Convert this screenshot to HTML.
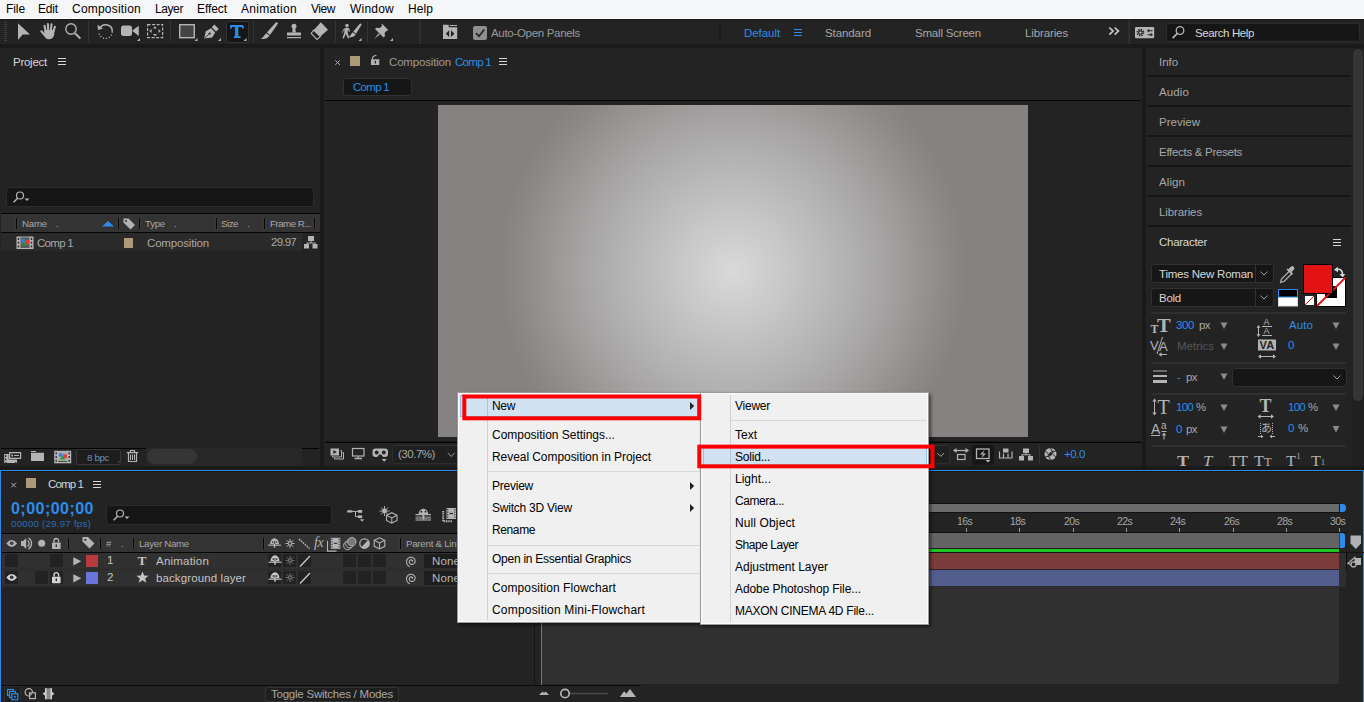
<!DOCTYPE html>
<html lang="en"><head><meta charset="utf-8"><title>Adobe After Effects</title>
<style>
html,body{margin:0;padding:0;background:#1a1a1a;overflow:hidden}
#app{position:relative;width:1364px;height:702px;overflow:hidden;background:#1a1a1a;font-family:"Liberation Sans",sans-serif;font-size:12px}
.r{position:absolute;box-sizing:border-box}
.t{position:absolute;white-space:nowrap;line-height:16px;height:16px}
svg.ic{position:absolute;left:0;top:0;pointer-events:none}

</style></head><body>
<div id="app">
<div class="r" style="left:0px;top:0px;width:1364px;height:19px;background:#f5f6f7;border-bottom:1px solid #fff"></div>
<div class="r" style="left:0px;top:19px;width:1364px;height:25px;background:#232323;"></div>
<div class="r" style="left:88px;top:21px;width:1px;height:21px;background:#343434;"></div>
<div class="r" style="left:170px;top:21px;width:1px;height:21px;background:#343434;"></div>
<div class="r" style="left:253px;top:21px;width:1px;height:21px;background:#343434;"></div>
<div class="r" style="left:335px;top:21px;width:1px;height:21px;background:#343434;"></div>
<div class="r" style="left:367px;top:21px;width:1px;height:21px;background:#343434;"></div>
<div class="r" style="left:0px;top:19px;width:1364px;height:1px;background:#171717;"></div>
<div class="r" style="left:419px;top:20px;width:2px;height:24px;background:#2f2f2f;"></div>
<div class="r" style="left:719px;top:20px;width:2px;height:24px;background:#1d1d1d;"></div>
<div class="r" style="left:1128px;top:20px;width:2px;height:24px;background:#2e2e2e;"></div>
<div class="r" style="left:225.5px;top:20.5px;width:23px;height:22px;background:#161616;border-radius:3px;border:1px solid #343434"></div>
<div class="r" style="left:0px;top:48px;width:320px;height:418px;background:#232323;"></div>
<div class="r" style="left:324px;top:48px;width:818px;height:418px;background:#232323;"></div>
<div class="r" style="left:1146px;top:48px;width:218px;height:418px;background:#232323;"></div>
<div class="r" style="left:0px;top:470px;width:1364px;height:233px;background:#232323;border:1px solid #2d8ceb;box-shadow:inset 1px 1px 0 #1a1614"></div>
<div class="r" style="left:1166px;top:23px;width:194px;height:19px;background:#161616;border:1px solid #2c2c2c;border-radius:3px"></div>
<div class="r" style="left:6px;top:187px;width:308px;height:20px;background:#161616;border:1px solid #2c2c2c;border-radius:3px"></div>
<div class="r" style="left:1px;top:213px;width:319px;height:1px;background:#050505;"></div>
<div class="r" style="left:1px;top:214px;width:319px;height:18px;background:#333333;"></div>
<div class="r" style="left:1px;top:232px;width:319px;height:1px;background:#050505;"></div>
<div class="r" style="left:15px;top:218px;width:3px;height:11px;background:#3a3a3a;"></div>
<div class="r" style="left:16px;top:218px;width:1px;height:11px;background:#060606;"></div>
<div class="r" style="left:117px;top:218px;width:3px;height:11px;background:#3a3a3a;"></div>
<div class="r" style="left:118px;top:218px;width:1px;height:11px;background:#060606;"></div>
<div class="r" style="left:138px;top:218px;width:3px;height:11px;background:#3a3a3a;"></div>
<div class="r" style="left:139px;top:218px;width:1px;height:11px;background:#060606;"></div>
<div class="r" style="left:215px;top:218px;width:3px;height:11px;background:#3a3a3a;"></div>
<div class="r" style="left:216px;top:218px;width:1px;height:11px;background:#060606;"></div>
<div class="r" style="left:263px;top:218px;width:3px;height:11px;background:#3a3a3a;"></div>
<div class="r" style="left:264px;top:218px;width:1px;height:11px;background:#060606;"></div>
<div class="r" style="left:313px;top:218px;width:3px;height:11px;background:#3a3a3a;"></div>
<div class="r" style="left:314px;top:218px;width:1px;height:11px;background:#060606;"></div>
<div class="r" style="left:1px;top:233px;width:301px;height:18px;background:#2a2a2a;"></div>
<div class="r" style="left:123.8px;top:238px;width:9.5px;height:9.7px;background:#ab9977;"></div>
<div class="r" style="left:1px;top:448px;width:145px;height:1px;background:#030303;"></div>
<div class="r" style="left:302px;top:448px;width:17px;height:1px;background:#030303;"></div>
<div class="r" style="left:146px;top:448px;width:156px;height:18px;background:#282828;"></div>
<div class="r" style="left:76px;top:449px;width:45px;height:16px;background:#1d1d1d;border:1px solid #383838;border-radius:3px"></div>
<div class="r" style="left:147px;top:449px;width:50px;height:15px;background:#353535;border-radius:8px"></div>
<div class="r" style="left:350px;top:56px;width:10px;height:10px;background:#ab9977;"></div>
<div class="r" style="left:343px;top:78px;width:69px;height:18px;background:#161616;border:1px solid #303030;border-radius:3px"></div>
<div class="r" style="left:325px;top:100px;width:816px;height:1px;background:#050505;"></div>
<div class="r" style="left:438px;top:105px;width:590px;height:332px;background:#868281;background:radial-gradient(circle 234px at 50% 50%, #d9d9d9 0, #c8c8c8 22%, #b4b3b3 48%, #9f9d9c 72%, #8d8a89 90%, #868281 100%)"></div>
<div class="r" style="left:325px;top:441px;width:816px;height:1px;background:#181818;"></div>
<div class="r" style="left:325px;top:442px;width:816px;height:1px;background:#020202;"></div>
<div class="r" style="left:391.5px;top:445px;width:70px;height:19px;background:#1f1f1f;border:1px solid #2e2e2e;border-radius:3px"></div>
<div class="r" style="left:920px;top:445px;width:30px;height:19px;background:#1f1f1f;border:1px solid #2e2e2e;border-radius:3px"></div>
<div class="r" style="left:972px;top:445px;width:22px;height:20px;background:#161616;border-radius:3px"></div>
<div class="r" style="left:1039px;top:446px;width:1px;height:18px;background:#343434;"></div>
<div class="r" style="left:1147px;top:75px;width:204px;height:2px;background:#161616;"></div>
<div class="r" style="left:1147px;top:105px;width:204px;height:2px;background:#161616;"></div>
<div class="r" style="left:1147px;top:135px;width:204px;height:2px;background:#161616;"></div>
<div class="r" style="left:1147px;top:165px;width:204px;height:2px;background:#161616;"></div>
<div class="r" style="left:1147px;top:195px;width:204px;height:2px;background:#161616;"></div>
<div class="r" style="left:1147px;top:225px;width:204px;height:2px;background:#161616;"></div>
<div class="r" style="left:1352px;top:48px;width:12px;height:418px;background:#202020;"></div>
<div class="r" style="left:1353px;top:49px;width:10px;height:352px;background:#353535;border-radius:5px"></div>
<div class="r" style="left:1151px;top:264px;width:123px;height:19px;background:#161616;border:1px solid #303030;border-radius:3px"></div>
<div class="r" style="left:1255px;top:265px;width:1px;height:17px;background:#303030;"></div>
<div class="r" style="left:1151px;top:288px;width:123px;height:19px;background:#161616;border:1px solid #303030;border-radius:3px"></div>
<div class="r" style="left:1255px;top:289px;width:1px;height:17px;background:#303030;"></div>
<div class="r" style="left:1151px;top:312px;width:195px;height:2px;background:#2f2f2f;"></div>
<div class="r" style="left:1151px;top:362px;width:195px;height:2px;background:#2f2f2f;"></div>
<div class="r" style="left:1151px;top:393px;width:195px;height:2px;background:#2f2f2f;"></div>
<div class="r" style="left:1151px;top:445px;width:195px;height:2px;background:#2f2f2f;"></div>
<div class="r" style="left:1232px;top:368px;width:115px;height:19px;background:#161616;border:1px solid #303030;border-radius:3px"></div>
<div class="r" style="left:1170px;top:451px;width:176px;height:15px;overflow:hidden;font-family:&quot;Liberation Serif&quot;,serif;color:#b4b4b4;font-size:15.5px;line-height:20px"><span style="position:absolute;left:7px;top:-.2px;transform-origin:0 50%;font-weight:700;transform:scaleX(1.16);">T</span><span style="position:absolute;left:33px;top:-.2px;transform-origin:0 50%;font-style:italic;transform:scaleX(1.08);">T</span><span style="position:absolute;left:59px;top:-.2px;transform-origin:0 50%;transform:scaleX(1.02);letter-spacing:-.3px;">TT</span><span style="position:absolute;left:84px;top:-.2px;transform-origin:0 50%;transform:scaleX(1.05);">T</span><span style="position:absolute;left:94px;top:-.2px;transform-origin:0 50%;font-size:12px;top:.950px;transform:scaleX(1.05);">T</span><span style="position:absolute;left:116px;top:-.2px;transform-origin:0 50%;transform:scaleX(1.05);">T</span><span style="position:absolute;left:126.5px;top:-.2px;transform-origin:0 50%;font-size:8px;top:-4.500px;">1</span><span style="position:absolute;left:141px;top:-.2px;transform-origin:0 50%;transform:scaleX(1.05);">T</span><span style="position:absolute;left:151px;top:-.2px;transform-origin:0 50%;font-size:8px;top:1.500px;">1</span></div>
<div class="r" style="left:26px;top:478px;width:10px;height:10px;background:#ab9977;"></div>
<div class="r" style="left:106px;top:505px;width:226px;height:20px;background:#161616;border:1px solid #2c2c2c;border-radius:3px"></div>
<div class="r" style="left:2px;top:533px;width:532px;height:1px;background:#050505;"></div>
<div class="r" style="left:2px;top:534px;width:532px;height:18px;background:#333333;"></div>
<div class="r" style="left:2px;top:552px;width:532px;height:1px;background:#050505;"></div>
<div class="r" style="left:67px;top:538px;width:3px;height:11px;background:#3a3a3a;"></div>
<div class="r" style="left:68px;top:538px;width:1px;height:11px;background:#060606;"></div>
<div class="r" style="left:99px;top:538px;width:3px;height:11px;background:#3a3a3a;"></div>
<div class="r" style="left:100px;top:538px;width:1px;height:11px;background:#060606;"></div>
<div class="r" style="left:132px;top:538px;width:3px;height:11px;background:#3a3a3a;"></div>
<div class="r" style="left:133px;top:538px;width:1px;height:11px;background:#060606;"></div>
<div class="r" style="left:262px;top:538px;width:3px;height:11px;background:#3a3a3a;"></div>
<div class="r" style="left:263px;top:538px;width:1px;height:11px;background:#060606;"></div>
<div class="r" style="left:399px;top:538px;width:3px;height:11px;background:#3a3a3a;"></div>
<div class="r" style="left:400px;top:538px;width:1px;height:11px;background:#060606;"></div>
<div class="r" style="left:2px;top:553px;width:532px;height:17px;background:#303030;"></div>
<div class="r" style="left:2px;top:569px;width:532px;height:1px;background:#2a2a2a;"></div>
<div class="r" style="left:268px;top:554px;width:13px;height:13px;background:#222222;"></div>
<div class="r" style="left:283px;top:554px;width:13px;height:13px;background:#222222;"></div>
<div class="r" style="left:298px;top:554px;width:13px;height:13px;background:#222222;"></div>
<div class="r" style="left:343px;top:554px;width:13px;height:13px;background:#222222;"></div>
<div class="r" style="left:358px;top:554px;width:13px;height:13px;background:#222222;"></div>
<div class="r" style="left:373px;top:554px;width:13px;height:13px;background:#222222;"></div>
<div class="r" style="left:424px;top:554px;width:101px;height:14px;background:#1e1e1e;"></div>
<div class="r" style="left:2px;top:570px;width:532px;height:17px;background:#303030;"></div>
<div class="r" style="left:2px;top:586px;width:532px;height:1px;background:#2a2a2a;"></div>
<div class="r" style="left:268px;top:571px;width:13px;height:13px;background:#222222;"></div>
<div class="r" style="left:283px;top:571px;width:13px;height:13px;background:#222222;"></div>
<div class="r" style="left:298px;top:571px;width:13px;height:13px;background:#222222;"></div>
<div class="r" style="left:343px;top:571px;width:13px;height:13px;background:#222222;"></div>
<div class="r" style="left:358px;top:571px;width:13px;height:13px;background:#222222;"></div>
<div class="r" style="left:373px;top:571px;width:13px;height:13px;background:#222222;"></div>
<div class="r" style="left:424px;top:571px;width:101px;height:14px;background:#1e1e1e;"></div>
<div class="r" style="left:5px;top:554px;width:13px;height:13px;background:#222222;"></div>
<div class="r" style="left:50px;top:554px;width:13px;height:13px;background:#222222;"></div>
<div class="r" style="left:86px;top:555px;width:12px;height:12px;background:#b73a3c;"></div>
<div class="r" style="left:5px;top:571px;width:13px;height:13px;background:#222222;"></div>
<div class="r" style="left:35px;top:571px;width:13px;height:13px;background:#222222;"></div>
<div class="r" style="left:50px;top:571px;width:13px;height:13px;background:#222222;"></div>
<div class="r" style="left:86px;top:572px;width:12px;height:12px;background:#6876dc;"></div>
<div class="r" style="left:1px;top:685px;width:640px;height:1px;background:#0c0c0c;"></div>
<div class="r" style="left:4px;top:686px;width:17px;height:16px;background:#1f1f1f;border:1px solid #2e2e2e;border-bottom:0"></div>
<div class="r" style="left:265px;top:687px;width:134px;height:15px;background:#1f1f1f;border:1px solid #333;border-radius:2px"></div>
<div class="r" style="left:534px;top:471px;width:1px;height:214px;background:#141414;"></div>
<div class="r" style="left:541px;top:552px;width:798px;height:132px;background:#303030;"></div>
<div class="r" style="left:1339px;top:552px;width:7px;height:35px;background:#2e2e2e;"></div>
<div class="r" style="left:541px;top:503px;width:799px;height:10px;background:#6b6b6b;border-top:1px solid #111;border-bottom:1px solid #111"></div>
<div class="r" style="left:1339px;top:504px;width:1px;height:8px;background:#1a1a1a;"></div>
<div class="r" style="left:541px;top:532px;width:806px;height:1px;background:#0e0e0e;"></div>
<div class="r" style="left:540px;top:528px;width:1px;height:4px;background:#9a9a9a;"></div>
<div class="r" style="left:593px;top:528px;width:1px;height:4px;background:#9a9a9a;"></div>
<div class="r" style="left:646px;top:528px;width:1px;height:4px;background:#9a9a9a;"></div>
<div class="r" style="left:700px;top:528px;width:1px;height:4px;background:#9a9a9a;"></div>
<div class="r" style="left:753px;top:528px;width:1px;height:4px;background:#9a9a9a;"></div>
<div class="r" style="left:806px;top:528px;width:1px;height:4px;background:#9a9a9a;"></div>
<div class="r" style="left:860px;top:528px;width:1px;height:4px;background:#9a9a9a;"></div>
<div class="r" style="left:913px;top:528px;width:1px;height:4px;background:#9a9a9a;"></div>
<div class="r" style="left:966px;top:528px;width:1px;height:4px;background:#9a9a9a;"></div>
<div class="r" style="left:1019px;top:528px;width:1px;height:4px;background:#9a9a9a;"></div>
<div class="r" style="left:1073px;top:528px;width:1px;height:4px;background:#9a9a9a;"></div>
<div class="r" style="left:1126px;top:528px;width:1px;height:4px;background:#9a9a9a;"></div>
<div class="r" style="left:1179px;top:528px;width:1px;height:4px;background:#9a9a9a;"></div>
<div class="r" style="left:1233px;top:528px;width:1px;height:4px;background:#9a9a9a;"></div>
<div class="r" style="left:1286px;top:528px;width:1px;height:4px;background:#9a9a9a;"></div>
<div class="r" style="left:1339px;top:528px;width:1px;height:4px;background:#9a9a9a;"></div>
<div class="r" style="left:541px;top:533px;width:799px;height:15px;background:#636363;"></div>
<div class="r" style="left:1339px;top:533px;width:1px;height:15px;background:#3a3a3a;"></div>
<div class="r" style="left:541px;top:548px;width:798px;height:1px;background:#1c1c1c;"></div>
<div class="r" style="left:541px;top:549px;width:798px;height:3px;background:#1fc626;"></div>
<div class="r" style="left:541px;top:552px;width:823px;height:1px;background:#151515;"></div>
<div class="r" style="left:541px;top:553px;width:798px;height:16px;background:#7b3b3a;"></div>
<div class="r" style="left:541px;top:569px;width:798px;height:1px;background:#262626;"></div>
<div class="r" style="left:541px;top:570px;width:798px;height:16px;background:#535d8d;"></div>
<div class="r" style="left:541px;top:586px;width:798px;height:1px;background:#2a2a2a;"></div>
<div class="r" style="left:1346px;top:534px;width:1px;height:18px;background:#1c1c1c;"></div>
<div class="r" style="left:1346px;top:552px;width:1px;height:18px;background:#0e0e0e;"></div>
<div class="r" style="left:541px;top:534px;width:1px;height:151px;background:#2d8ceb;"></div>
<svg class="ic" width="1364" height="702" viewBox="0 0 1364 702">
<path d="M4 22.5h3M4 24.5h3M4 26.5h3M4 28.5h3M4 30.5h3M4 32.5h3M4 34.5h3M4 36.5h3M4 38.5h3M4 40.5h3" stroke="#3c3c3c" stroke-width="1"/>
<path d="M18 23.3 L18 40 L22.6 34.6 L30 34.6 Z" fill="#b4b4b4"/>
<g stroke="#b4b4b4" stroke-width="2.100" stroke-linecap="round" fill="none"><path d="M45.600 31l-1.100-5.300M48.200 30.500l-.300-6.500M50.900 30.500l.600-6.100M53.400 31.500l1.500-4.700M45 35.500l-3.600-4.200"/></g><path d="M44.300 30h10.200l-.300 4.500c-.400 3.200-2.500 4.800-5.200 4.800-2.900 0-4.700-2-4.700-5z" fill="#b4b4b4"/>
<g fill="none" stroke="#b4b4b4"><circle cx="71" cy="29" r="5.2" stroke-width="1.4"/><path d="M75 33.2l5.400 5.400" stroke-width="2"/></g>
<g fill="none" stroke="#b4b4b4"><path d="M99.800 28.500A6.600 6.600 0 0 1 112.300 31.700" stroke-width="1.5"/><path d="M112.300 31.700A6.600 6.600 0 0 1 98.800 31.700" stroke-width="1.300" stroke-dasharray="1.100 1.900"/></g><path d="M97.500 24.800l.5 5.200 5-1.600z" fill="#b4b4b4"/>
<g fill="#b4b4b4"><rect x="121" y="25.500" width="11" height="10.500" rx="2.500"/><path d="M132 30.700l6.800-5v10.200z"/><path d="M140 38v3h-3z"/></g>
<g fill="none" stroke="#b4b4b4" stroke-width="1.200"><rect x="147.600" y="24.600" width="15" height="13" stroke-dasharray="3 1.500"/></g><g fill="#b4b4b4"><path d="M155 26.200l2 2.300h-4z"/><path d="M155 36.200l2-2.300h-4z"/><path d="M149.300 31l2.300-2v4z"/><path d="M160.800 31l-2.300-2v4z"/></g>
<rect x="179.700" y="24.700" width="14.600" height="13" fill="#444" stroke="#b4b4b4" stroke-width="1.400"/><path d="M197.500 38v3h-3z" fill="#b4b4b4"/>
<g fill="#b4b4b4"><path d="M204.200 38.600l1.600-7.400 5.200-3 4.200 4.200-3 5.200z"/><path d="M211.800 27.300l2.600-2.800 4.400 4.400-2.800 2.600z"/><path d="M221 38v3h-3z"/></g><circle cx="209.700" cy="33.600" r="1.100" fill="#232323"/><path d="M204.500 38.300l4.600-4.400" stroke="#232323" stroke-width=".8"/>
<path d="M246.500 38v3h-3z" fill="#b4b4b4"/>
<path d="M234 36.200h6.600v1.800h-6.600zM230 26.500h1.800v2h-1.800zM242 26.500h1.800v2h-1.800z" fill="#2d8ceb"/>
<g fill="#b4b4b4"><path d="M266.900 32.400l8.900-9.800c1-.900 2.600.300 1.900 1.500l-7.700 10.800z"/><path d="M266.200 33.200l3.200 2.400c-1.300 3-4.800 3.800-8.600 3.300 2.600-1.100 3.200-3.900 5.400-5.700z"/></g>
<g fill="#b4b4b4"><circle cx="294" cy="26.200" r="2.500"/><path d="M292.800 27.500h2.400l.6 5h-3.600z"/><path d="M287 32.500h14v3h-14z"/><path d="M287 37h14v1.200h-14z"/></g>
<g><path d="M320.800 22.300l7.200 7.500-7.700 6.800-6.700-6.400z" fill="#b4b4b4"/><path d="M313.600 30.200l6.700 6.400-3.400 2.800-5.700-5.900z" fill="none" stroke="#b4b4b4" stroke-width="1.100"/></g>
<g fill="#b4b4b4"><circle cx="347" cy="25.400" r="1.700"/><path d="M343.300 29.200l3-1.600 2.600.3 1.200 3.300-1 .5-1.200-2.200-.3 3.300 1.800 5.300-1.400.4-2.200-4.700-2 4.800-1.300-.500 1.800-5.400.2-3-1 .600-.6 2.400-1-.2z"/><path d="M353.300 31.500l6.500-7.700c.900-.800 2.200.200 1.600 1.300l-5.400 8.600z"/><path d="M352.700 32.200l3 2.300c-1.200 2.500-4.200 3-7.200 2.500 2.200-.9 2.500-3.300 4.200-4.800z"/><path d="M361.500 38v3h-3z"/></g>
<g fill="#b4b4b4"><path d="M381.500 23.300l7 7-1.800.4-2 2 .2 3.600-1.300 1.300-8.600-8.600 1.300-1.300 3.600.2 2-2z"/><path d="M378.600 33.200l1.200 1.200-5.600 4.600z"/><path d="M393 38v3h-3z"/></g>
<g><path d="M443 24.700h5.700v2.600h8.500v11.700h-14.200z" fill="#b4b4b4"/><path d="M449.700 25h7.500v1h-7.500z" fill="#b4b4b4"/><path d="M449.200 30.300v6.800l-3.400-3.400zM451 30.300v6.800l3.400-3.400z" fill="#232323"/></g>
<rect x="473" y="26" width="14" height="14" rx="2" fill="#8f8f8f"/><path d="M476 33.200l3 3.100 5.300-6.800" fill="none" stroke="#232323" stroke-width="1.700"/>
<path d="M794 29.500h8M794 32.500h8M794 35.500h8" stroke="#2d8ceb" stroke-width="1.200"/>
<path d="M1109.300 27.500l3.800 3.600-3.800 3.600M1114.600 27.500l3.800 3.600-3.800 3.600" fill="none" stroke="#c8c8c8" stroke-width="1.700"/>
<rect x="1135" y="27" width="19.200" height="11.200" rx="1.200" fill="#b4b4b4"/><circle cx="1140.400" cy="32.600" r="3" fill="none" stroke="#232323" stroke-width="1.700" stroke-dasharray="1.250 1.106"/><circle cx="1140.400" cy="32.600" r="2.300" fill="#232323"/><circle cx="1140.400" cy="32.600" r="1.150" fill="#cfcfcf"/><path d="M1148.500 30.700h4M1147.500 34.700h4" stroke="#232323" stroke-width="1.100"/><path d="M1146.800 30.700l2.400-1.900v3.800zM1153 34.700l-2.400-1.900v3.800z" fill="#232323"/>
<g fill="none" stroke="#b4b4b4"><circle cx="1180" cy="30.500" r="3.800" stroke-width="1.300"/><path d="M1177.300 33.400l-4.600 4.800" stroke-width="1.700"/></g>
<path d="M58 58.500h8M58 61.500h8M58 64.500h8" stroke="#d6d6d6" stroke-width="1.100"/>
<g fill="none" stroke="#b4b4b4"><circle cx="20" cy="195.500" r="3.500" stroke-width="1.200"/><path d="M17.600 198.200l-4 4" stroke-width="1.500"/></g><path d="M24.500 198.500h5l-2.500 2.600z" fill="#b4b4b4"/>
<path d="M102 226.500l6-5.500 6 5.500z" fill="#2d8ceb"/>
<path d="M123.500 218.500h5l6.500 6.500-4.500 4.500-7-7z" fill="#b4b4b4"/><circle cx="126" cy="221" r="1" fill="#333333"/>
<g><rect x="16.5" y="236.5" width="17" height="12.500" fill="#b6b6b6"/><rect x="17.8" y="238.0" width="1.400" height="2" fill="#2a2a2a"/><rect x="17.8" y="241.7" width="1.400" height="2" fill="#2a2a2a"/><rect x="17.8" y="245.4" width="1.400" height="2" fill="#2a2a2a"/><rect x="30.8" y="238.0" width="1.400" height="2" fill="#2a2a2a"/><rect x="30.8" y="241.7" width="1.400" height="2" fill="#2a2a2a"/><rect x="30.8" y="245.4" width="1.400" height="2" fill="#2a2a2a"/><rect x="20.5" y="237.3" width="9" height="9.700" fill="#606060"/><rect x="20.5" y="246.8" width="9" height=".900" fill="#3a3a3a"/><circle cx="23.0" cy="240.8" r="2" fill="#2f80e8"/><rect x="25.5" y="240.0" width="3.600" height="4" fill="#e83a3a"/><path d="M22.3 245.3l2.400-3.800 2.400 3.800z" fill="#18a030"/></g>
<g fill="#b4b4b4"><rect x="308" y="236" width="6" height="5"/><rect x="304" y="244" width="5" height="4.500"/><rect x="312.500" y="244" width="5" height="4.500"/><path d="M310.500 241h1v1.500h4v1.500h-1v-.5h-7v.5h-1v-1.500h4z"/></g>
<g><path d="M4.200 454h4.500v5.500h8.300v3.500h-12.800z" fill="#b4b4b4"/><rect x="5" y="455.200" width="1.300" height="1.800" fill="#232323"/><rect x="5" y="458.500" width="1.300" height="1.800" fill="#232323"/><rect x="5.500" y="462" width="1" height="1" fill="#232323"/><rect x="15.300" y="462" width="1" height="1" fill="#232323"/><rect x="9" y="452" width="12.200" height="7" fill="#b4b4b4"/><rect x="10.200" y="453.300" width="9.800" height="4.400" fill="#232323"/><rect x="11.300" y="454.600" width="1.700" height="1.800" fill="#b4b4b4"/><rect x="14" y="455" width="5" height="1" fill="#b4b4b4"/></g>
<path d="M31 451h5v1h-5zM31 452.800h13v8.200h-13z" fill="#b4b4b4"/>
<g><rect x="54.2" y="450.8" width="17" height="12.500" fill="#b6b6b6"/><rect x="55.5" y="452.3" width="1.400" height="2" fill="#2a2a2a"/><rect x="55.5" y="456.0" width="1.400" height="2" fill="#2a2a2a"/><rect x="55.5" y="459.7" width="1.400" height="2" fill="#2a2a2a"/><rect x="68.5" y="452.3" width="1.400" height="2" fill="#2a2a2a"/><rect x="68.5" y="456.0" width="1.400" height="2" fill="#2a2a2a"/><rect x="68.5" y="459.7" width="1.400" height="2" fill="#2a2a2a"/><rect x="58.2" y="451.6" width="9" height="9.700" fill="#a9a9a9"/><rect x="58.2" y="461.1" width="9" height=".900" fill="#3a3a3a"/><circle cx="60.7" cy="455.1" r="2" fill="#2f80e8"/><rect x="63.2" y="454.3" width="3.600" height="4" fill="#e83a3a"/><path d="M60.0 459.6l2.400-3.800 2.400 3.800z" fill="#18a030"/></g>
<g fill="none" stroke="#b4b4b4"><path d="M128.500 453v8.500h8v-8.500" stroke-width="1.200"/><path d="M130.500 454.500v5.500M132.500 454.500v5.500M134.500 454.500v5.500" stroke-width="1"/><path d="M126.800 452.600h11.400" stroke-width="1.300"/><path d="M130.500 452v-1.500h4v1.500" stroke-width="1.100"/></g>
<path d="M335.3 60.300000000000004l4.600 4.600M339.90000000000003 60.300000000000004l-4.600 4.600" stroke="#b0b0b0" stroke-width="1"/>
<g><rect x="371" y="59.200" width="8.300" height="5.800" rx=".500" fill="#b4b4b4"/><path d="M372.400 59.500v-1a3.600 3.300 0 0 1 4-3" fill="none" stroke="#b4b4b4" stroke-width="1.200"/><path d="M374.700 60.800h1.200v2.700h-1.200z" fill="#232323"/></g>
<path d="M499 58.500h8M499 61.500h8M499 64.500h8" stroke="#d6d6d6" stroke-width="1.100"/>
<g><rect x="330.500" y="448.500" width="8.500" height="7" fill="#b4b4b4"/><path d="M333.300 450v4l3.500-2z" fill="#232323"/><path d="M340.500 450.500h1v6.500h-9v-1" fill="none" stroke="#b4b4b4" stroke-width="1"/><path d="M342.500 452.500h1v6.500h-9v-1" fill="none" stroke="#b4b4b4" stroke-width="1"/></g>
<g><rect x="352.500" y="448.500" width="11.500" height="7.500" fill="none" stroke="#b4b4b4" stroke-width="1.200"/><path d="M358.200 456.500v1.500M354.500 458.500h7.500" stroke="#b4b4b4" stroke-width="1.300"/></g>
<g fill="#b4b4b4"><path d="M372.500 451.500a3 3 0 0 1 3-3h9.500a3 3 0 0 1 3 3v2.500a3 3 0 0 1-3 3h-1.800l-2-2.500h-2l-2 2.500h-1.700a3 3 0 0 1-3-3z"/><path d="M381.600 459h5.200l-2.600 2.800z"/></g><circle cx="376.700" cy="452.500" r="1.900" fill="#232323"/><circle cx="383.800" cy="452.500" r="1.900" fill="#232323"/>
<path d="M447.800 453l3.400 3.400 3.400-3.400" fill="none" stroke="#a4a4a4" stroke-width="1"/>
<path d="M937.300 453l3.400 3.400 3.400-3.400" fill="none" stroke="#a4a4a4" stroke-width="1"/>
<g fill="none" stroke="#b4b4b4" stroke-width="1.200"><rect x="957.500" y="454.500" width="7.500" height="5"/><path d="M955 450.500h12"/></g><path d="M953 450.500l3.500-2.500v5zM969 450.500l-3.500-2.500v5z" fill="#b4b4b4"/>
<g><rect x="976.500" y="449" width="12.500" height="9.500" fill="none" stroke="#b4b4b4" stroke-width="1.300"/><path d="M984.500 450l-4.500 4.500h3l-1.500 3.500 4.500-4.500h-3z" fill="#b4b4b4"/><path d="M985.500 460h5l-2.500 2.600z" fill="#b4b4b4"/></g>
<g fill="none" stroke="#b4b4b4" stroke-width="1.200"><path d="M999.500 451.500v6.500h12.500v-6.500"/><path d="M1003.500 453.500v4.500M1008 453.500v4.500"/></g><rect x="1003" y="448.500" width="5.500" height="4" fill="#b4b4b4"/>
<g fill="#b4b4b4"><rect x="1023" y="448.500" width="6" height="4.500"/><rect x="1019" y="456" width="5" height="4.500"/><rect x="1028" y="456" width="5" height="4.500"/><path d="M1025.500 453h1v1.200h4v1.800h-1v-.8h-7v.8h-1v-1.800h4z"/></g>
<g><circle cx="1050.500" cy="454" r="6" fill="#b4b4b4"/><g stroke="#232323" stroke-width="1" fill="none"><path d="M1050.500 448l2.500 5M1055.700 451l-5.500 1.500M1055.700 457l-4-4M1050.500 460l-2.500-5M1045.300 457l5.500-1.500M1045.300 451l4 4"/></g><circle cx="1050.500" cy="454" r="1.600" fill="#232323"/></g>
<path d="M1333 239.500h8M1333 242.500h8M1333 245.500h8" stroke="#d6d6d6" stroke-width="1.100"/>
<path d="M1260.5 271.5l3.500 3.500 3.500-3.500" fill="none" stroke="#a4a4a4" stroke-width="1"/>
<path d="M1260.5 295.5l3.500 3.500 3.500-3.500" fill="none" stroke="#a4a4a4" stroke-width="1"/>
<g><path d="M1280.500 282.500l1-3.500 8-8 2.500 2.500-8 8z" fill="none" stroke="#b4b4b4" stroke-width="1.200"/><path d="M1288 269.500l2.800-2.800a2 2 0 0 1 2.800 0l.2.200a2 2 0 0 1 0 2.800l-2.800 2.800z" fill="#b4b4b4"/><path d="M1287 269l5.500 5.500" stroke="#b4b4b4" stroke-width="1.600"/></g>
<g><rect x="1316.500" y="277.500" width="29" height="29" fill="#fff" stroke="#000" stroke-width="1"/><rect x="1325" y="286" width="12" height="12" fill="#000"/><path d="M1317 306l28.500-28.500" stroke="#e31313" stroke-width="1.800"/></g>
<rect x="1303.500" y="264.500" width="29" height="29" fill="#e31313" stroke="#000" stroke-width="1"/>
<g fill="none" stroke="#d6d6d6" stroke-width="1.600"><path d="M1336.500 269.500c4-1 6.500 1.500 6 5.500"/></g><path d="M1334 269.800l4-3v5.500z" fill="#d6d6d6"/><path d="M1342.700 277.500l-3.200-3.500h5.800z" fill="#d6d6d6"/>
<rect x="1278.500" y="289.500" width="19" height="16.500" fill="#fff" stroke="#ddd" stroke-width="1"/><rect x="1278.500" y="289.500" width="19" height="7.500" fill="#000" stroke="#2d8ceb" stroke-width="1"/>
<rect x="1304.500" y="295.500" width="10" height="10" fill="#fff" stroke="#222" stroke-width="1"/><path d="M1305 305l9-9" stroke="#e31313" stroke-width="1"/>
<path d="M1220.5 322.5h7l-3.500 6.500z" fill="#8a8a8a"/>
<g stroke="#b4b4b4" fill="none" stroke-width="1"><path d="M1258.500 327v8"/><path d="M1262 326.500h10M1262 335.500h10"/></g><path d="M1258.500 325l2 2.800h-4zM1258.500 337l2-2.800h-4z" fill="#b4b4b4"/>
<path d="M1332.5 322.5h7l-3.500 6.500z" fill="#8a8a8a"/>
<path d="M1157 354l5.500-17" stroke="#b4b4b4" stroke-width="1"/><path d="M1160 354.500h7" stroke="#b4b4b4" stroke-width="1"/><path d="M1158.500 354.500l3-2.200v4.400z" fill="#b4b4b4"/>
<path d="M1220.5 343.5h7l-3.500 6.500z" fill="#8a8a8a"/>
<rect x="1258" y="339.500" width="18" height="11" fill="#b4b4b4"/><path d="M1259.500 356.500h15" stroke="#b4b4b4" stroke-width="1"/><path d="M1258 356.500l3-2.200v4.400zM1276 356.500l-3-2.200v4.400z" fill="#b4b4b4"/>
<path d="M1332.5 343.5h7l-3.500 6.500z" fill="#8a8a8a"/>
<path d="M1153 371h14" stroke="#b4b4b4" stroke-width="1"/><path d="M1153 376h14" stroke="#b4b4b4" stroke-width="2"/><path d="M1153 381.500h14" stroke="#b4b4b4" stroke-width="3"/>
<path d="M1220.5 373.5h7l-3.500 6.500z" fill="#8a8a8a"/>
<path d="M1333.5 375.5l3.500 3.500 3.500-3.500" fill="none" stroke="#a4a4a4" stroke-width="1"/>
<path d="M1154.500 400.500v13" stroke="#b4b4b4" stroke-width="1"/><path d="M1154.500 398.500l2.200 3h-4.400zM1154.500 415.500l2.200-3h-4.400z" fill="#b4b4b4"/>
<path d="M1220.5 404.5h7l-3.500 6.500z" fill="#8a8a8a"/>
<path d="M1259 416.500h13" stroke="#b4b4b4" stroke-width="1"/><path d="M1257.500 416.500l3-2.200v4.400zM1274 416.500l-3-2.200v4.400z" fill="#b4b4b4"/>
<path d="M1332.5 404.5h7l-3.500 6.500z" fill="#8a8a8a"/>
<path d="M1151 435.500h9M1161.500 431.500h5" stroke="#b4b4b4" stroke-width="1"/><path d="M1164 434.500v5" stroke="#b4b4b4" stroke-width="1"/><path d="M1164 432.500l2.200 3h-4.400z" fill="#b4b4b4"/>
<path d="M1220.5 426.5h7l-3.500 6.500z" fill="#8a8a8a"/>
<path d="M1260.500 423v11M1272.500 423v11" stroke="#b4b4b4" stroke-width="1" stroke-dasharray="1 1"/><path d="M1258 436.500h4M1275 436.500h-4" stroke="#b4b4b4" stroke-width="1"/><path d="M1263.500 436.500l-2.500-1.800v3.600zM1269.500 436.500l2.500-1.800v3.600z" fill="#b4b4b4"/>
<path d="M1332.5 426h7l-3.500 6.500z" fill="#8a8a8a"/>
<path d="M11.3 482.8l4.600 4.600M15.899999999999999 482.8l-4.600 4.600" stroke="#b0b0b0" stroke-width="1"/>
<path d="M93 481.500h8M93 484.500h8M93 487.500h8" stroke="#d6d6d6" stroke-width="1.100"/>
<g fill="none" stroke="#b4b4b4"><circle cx="120" cy="513.500" r="3.500" stroke-width="1.200"/><path d="M117.600 516.200l-4 4" stroke-width="1.500"/></g><path d="M124.500 516.500h5l-2.500 2.600z" fill="#b4b4b4"/>
<g fill="#b4b4b4"><rect x="347" y="510.200" width="5.500" height="2.400" rx="1.200"/><rect x="358" y="510" width="4.200" height="2.800"/><rect x="358" y="515.300" width="4.200" height="2.800"/><path d="M360 519.300h4.200l-2.100 2.500z"/></g><path d="M352 511.400h6M355.500 511.400v5.300h2.500" fill="none" stroke="#b4b4b4" stroke-width="1"/>
<g stroke="#b4b4b4" fill="none" stroke-width="1.100"><path d="M386.500 515.300l5.300-2.600 5.200 2.600v5.200l-5.200 2.700-5.300-2.700z"/><path d="M386.500 515.300l5.300 2.600 5.200-2.600M391.800 517.900v5.300"/><path d="M379.500 511h10M384.500 506v10M381 507.500l7 7M388 507.500l-7 7" stroke-width=".9"/></g><circle cx="384.500" cy="511" r="2.400" fill="#b4b4b4"/>
<g><path d="M418.500 514.500a4.900 5.800 0 0 1 9.800 0z" fill="#b4b4b4"/><path d="M415.500 514.600h15.500" stroke="#b4b4b4" stroke-width="1.200"/><rect x="415.500" y="516.300" width="15.500" height="4.700" fill="#707070"/><rect x="422.500" y="512.500" width="1.800" height="7" fill="#b4b4b4"/><circle cx="421.300" cy="511.700" r=".900" fill="#232323"/><circle cx="425.500" cy="511.700" r=".900" fill="#232323"/></g>
<g><rect x="446.5" y="508" width="9.500" height="11" fill="#b4b4b4"/><path d="M447.7 509v9M454.8 509v9" stroke="#232323" stroke-width="1.100" stroke-dasharray="1.300 1.200"/><path d="M449.5 513.5h3.500" stroke="#232323" stroke-width="1.200"/><path d="M443.2 511v10.300h9" fill="none" stroke="#b4b4b4" stroke-width="2" stroke-dasharray="1.400 .8"/></g>
<g><path d="M6.299999999999999 543.5q5.400-6.800 10.800 0q-5.400 6.800-10.800 0z" fill="#b4b4b4"/><circle cx="11.7" cy="543.3" r="1.800" fill="#333333"/><circle cx="11.7" cy="543.3" r=".700" fill="#6a6a6a"/></g>
<path d="M21 541h2.200l3-3v11l-3-3h-2.200z" fill="#b4b4b4"/><g fill="none" stroke="#b4b4b4" stroke-width="1.300"><path d="M27.500 540.500a3.500 3.500 0 0 1 0 6"/><path d="M28.500 538a6.500 6.500 0 0 1 0 11"/></g>
<circle cx="41.700" cy="543.200" r="3.500" fill="#b4b4b4"/>
<g><rect x="52.0" y="542.6" width="8.600" height="6.500" rx=".700" fill="#b4b4b4"/><path d="M54.0 542.6v-1.800a2.300 2.300 0 0 1 4.600 0v1.800" fill="none" stroke="#b4b4b4" stroke-width="1.400"/><rect x="55.599999999999994" y="544.4" width="1.400" height="2.600" fill="#333333"/></g>
<path d="M82.500 537h5.500l6.500 6.500-5 5-7-7z" fill="#b4b4b4"/><circle cx="85.300" cy="539.800" r="1.100" fill="#333333"/>
<g><path d="M270 544.3a4.500 6 0 0 1 9 0z" fill="#b4b4b4"/><path d="M268 545.2h13" stroke="#b4b4b4" stroke-width="1.100"/><rect x="273.8" y="543.5" width="1.400" height="4.300" fill="#b4b4b4"/><circle cx="272.7" cy="542.1" r=".800" fill="#333333"/><circle cx="276.3" cy="542.1" r=".800" fill="#333333"/><rect x="274.1" y="541.0" width=".800" height="3" fill="#333333"/></g>
<g stroke="#b4b4b4" stroke-width="1"><path d="M285.5 543.5h9M290 539.0v9M286.8 540.3l6.400 6.400M293.2 540.3l-6.400 6.400"/></g><circle cx="290" cy="543.5" r="2.3" fill="#b4b4b4"/><circle cx="290" cy="543.5" r="1.1999999999999997" fill="#333333"/>
<path d="M299 539l10.500 9.500" stroke="#b4b4b4" stroke-width="1.600" stroke-dasharray="1.600 1"/>
<g><rect x="330.8" y="537.8" width="9.500" height="11" fill="#b4b4b4"/><path d="M332.0 538.8v9M339.1 538.8v9" stroke="#333333" stroke-width="1.100" stroke-dasharray="1.300 1.200"/><path d="M333.8 543.3h3.500" stroke="#333333" stroke-width="1.200"/><path d="M327.5 540.8v10.300h9" fill="none" stroke="#b4b4b4" stroke-width="1.1" stroke-dasharray="none"/></g>
<g fill="#333333" stroke="#b4b4b4" stroke-width="1"><circle cx="347.800" cy="545.500" r="4.200"/><circle cx="349.800" cy="543.600" r="4.200"/><circle cx="351.800" cy="541.700" r="4.200" fill="#787878"/></g>
<circle cx="364.500" cy="543.500" r="4.700" fill="none" stroke="#b4b4b4" stroke-width="1.200"/><path d="M368.200 540a5.200 5.200 0 0 1-7.200 7.400z" fill="#b4b4b4"/>
<g stroke="#b4b4b4" fill="none" stroke-width="1.100"><path d="M374.200 540.300l5.300-2.500 5.300 2.500v6l-5.300 2.700-5.300-2.700z"/><path d="M374.200 540.300l5.300 2.600 5.300-2.600M379.500 542.900v6"/></g>
<path d="M73.300 557.2l8 4.100-8 4.100z" fill="#b4b4b4"/>
<g><path d="M270.5 561.3a4.500 6 0 0 1 9 0z" fill="#c8c8c8"/><path d="M268.5 562.2h13" stroke="#c8c8c8" stroke-width="1.100"/><rect x="274.3" y="560.5" width="1.400" height="4.300" fill="#c8c8c8"/><circle cx="273.2" cy="559.1" r=".800" fill="#222222"/><circle cx="276.8" cy="559.1" r=".800" fill="#222222"/><rect x="274.6" y="558.0" width=".800" height="3" fill="#222222"/></g>
<g stroke="#6e6e6e" stroke-width="1"><path d="M285.5 560.5h9M290 556.0v9M286.8 557.3l6.400 6.400M293.2 557.3l-6.400 6.400"/></g><circle cx="290" cy="560.5" r="2" fill="#6e6e6e"/><circle cx="290" cy="560.5" r="0.8999999999999999" fill="#222222"/>
<path d="M300 566.5l10-10.500" stroke="#c8c8c8" stroke-width="1.400"/>
<path d="M412.0 561.9L412.1 561.8L412.2 561.7L412.3 561.6L412.4 561.4L412.5 561.2L412.5 561.0L412.4 560.8L412.3 560.5L412.1 560.3L411.9 560.2L411.7 560.0L411.4 559.9L411.1 559.9L410.8 559.9L410.4 560.0L410.1 560.2L409.8 560.4L409.6 560.7L409.4 561.1L409.3 561.5L409.2 561.9L409.3 562.4L409.4 562.8L409.6 563.3L409.9 563.6L410.3 564.0L410.8 564.2L411.3 564.4L411.9 564.4L412.4 564.4L413.0 564.2L413.5 564.0L414.0 563.6L414.5 563.1L414.8 562.6L415.0 561.9L415.1 561.3L415.1 560.6L414.9 559.9L414.6 559.2L414.2 558.6L413.7 558.1L413.0 557.7L412.3 557.4L411.5 557.2L410.7 557.2L409.9 557.4L409.1 557.7L408.3 558.1L407.7 558.7L407.2 559.5L406.8 560.3L406.6 561.2L406.5 562.1L406.7 563.1L407.0 564.0L407.5 564.8L408.1 565.6L408.9 566.2L409.8 566.7" fill="none" stroke="#b4b4b4" stroke-width="1.100"/>
<path d="M73.300 574.2l8 4.100-8 4.100z" fill="#b4b4b4"/>
<g><path d="M270.5 578.3a4.500 6 0 0 1 9 0z" fill="#c8c8c8"/><path d="M268.5 579.2h13" stroke="#c8c8c8" stroke-width="1.100"/><rect x="274.3" y="577.5" width="1.400" height="4.300" fill="#c8c8c8"/><circle cx="273.2" cy="576.1" r=".800" fill="#222222"/><circle cx="276.8" cy="576.1" r=".800" fill="#222222"/><rect x="274.6" y="575.0" width=".800" height="3" fill="#222222"/></g>
<g stroke="#6e6e6e" stroke-width="1"><path d="M285.5 577.5h9M290 573.0v9M286.8 574.3l6.400 6.400M293.2 574.3l-6.400 6.400"/></g><circle cx="290" cy="577.5" r="2" fill="#6e6e6e"/><circle cx="290" cy="577.5" r="0.8999999999999999" fill="#222222"/>
<path d="M300 583.5l10-10.500" stroke="#c8c8c8" stroke-width="1.400"/>
<path d="M412.0 578.9L412.1 578.8L412.2 578.7L412.3 578.6L412.4 578.4L412.5 578.2L412.5 578.0L412.4 577.8L412.3 577.5L412.1 577.3L411.9 577.2L411.7 577.0L411.4 576.9L411.1 576.9L410.8 576.9L410.4 577.0L410.1 577.2L409.8 577.4L409.6 577.7L409.4 578.1L409.3 578.5L409.2 578.9L409.3 579.4L409.4 579.8L409.6 580.3L409.9 580.6L410.3 581.0L410.8 581.2L411.3 581.4L411.9 581.4L412.4 581.4L413.0 581.2L413.5 581.0L414.0 580.6L414.5 580.1L414.8 579.6L415.0 578.9L415.1 578.3L415.1 577.6L414.9 576.9L414.6 576.2L414.2 575.6L413.7 575.1L413.0 574.7L412.3 574.4L411.5 574.2L410.7 574.2L409.9 574.4L409.1 574.7L408.3 575.1L407.7 575.7L407.2 576.5L406.8 577.3L406.6 578.2L406.5 579.1L406.7 580.1L407.0 581.0L407.5 581.8L408.1 582.6L408.9 583.2L409.8 583.7" fill="none" stroke="#b4b4b4" stroke-width="1.100"/>
<g><path d="M6.299999999999999 577.5q5.400-6.800 10.800 0q-5.400 6.800-10.800 0z" fill="#d4d4d4"/><circle cx="11.7" cy="577.3" r="1.800" fill="#222"/><circle cx="11.7" cy="577.3" r=".700" fill="#6a6a6a"/></g>
<g><rect x="52.0" y="576.7" width="8.600" height="6.500" rx=".700" fill="#d4d4d4"/><path d="M54.0 576.7v-1.800a2.300 2.300 0 0 1 4.600 0v1.800" fill="none" stroke="#d4d4d4" stroke-width="1.400"/><rect x="55.599999999999994" y="578.5" width="1.400" height="2.600" fill="#222222"/></g>
<path d="M142.500 571.500l1.700 4 4.300.300-3.300 2.700 1.100 4.200-3.800-2.400-3.800 2.400 1.100-4.200-3.300-2.700 4.300-.300z" fill="#c4c4c4"/>
<g fill="#1f1f1f" stroke="#2d8ceb" stroke-width="1.200"><rect x="7.500" y="689.500" width="6" height="6"/><rect x="9.500" y="691.500" width="6" height="6"/><rect x="11.800" y="693.800" width="6" height="6"/></g><circle cx="14.800" cy="696.800" r="1.100" fill="#2d8ceb"/>
<g fill="none" stroke="#b4b4b4" stroke-width="1.200"><circle cx="28.800" cy="692.300" r="3.700"/><rect x="29.600" y="692.800" width="5.800" height="5.800" fill="#232323"/></g><path d="M30.200 693.400h2.500l-2.500 2.500z" fill="#b4b4b4"/>
<path d="M45 688.200h7v3.800l2.300 1.700-2.300 1.700v3.800h-7v-3.800l-2.300-1.700 2.300-1.700z" fill="#8a8a8a"/><path d="M45 688.200h1.500v11h-1.500v-3.800l-2.300-1.700 2.300-1.700zM52 688.200h-1.500v11h1.500v-3.800l2.300-1.700-2.300-1.700z" fill="#cfcfcf"/>
<path d="M1340 504h2.500a3.500 4 0 0 1 0 8h-2.500z" fill="#2d8ceb"/>
<path d="M1340 533h2.500a2.500 3 0 0 1 2.500 3v9.500a2.500 2.500 0 0 1-2.500 2.500h-2.500z" fill="#2d8ceb"/>
<path d="M1350.500 535.500h10.500v8l-5.200 5.500-5.300-5.500z" fill="#b0b0b0"/>
<g><rect x="1354.500" y="558" width="6.500" height="7" fill="#b4b4b4"/><path d="M1355.500 556.800l-7.500 6.500 4 1.800" fill="none" stroke="#b4b4b4" stroke-width="1.200"/><circle cx="1353.500" cy="564.400" r="2.500" fill="#232323" stroke="#b4b4b4" stroke-width="1.200"/></g>
<path d="M539 695h10l-3.300-3.500-1.700 1.500-1.500-1.500z" fill="#b4b4b4"/>
<path d="M570 693.500h38" stroke="#4a4a4a" stroke-width="1.500"/><circle cx="565" cy="693.500" r="4.200" fill="#232323" stroke="#b4b4b4" stroke-width="1.700"/>
<path d="M620 697h16l-6-8-4 5-2-2.500z" fill="#b4b4b4"/><path d="M620 697l4.500-5.500 2 2.500" fill="#b4b4b4"/>
</svg>
<div class="t" style="left:6px;top:1.0px;font-size:12px;color:#000;letter-spacing:-0.09px;">File</div>
<div class="t" style="left:38px;top:1.0px;font-size:12px;color:#000;letter-spacing:-0.17px;">Edit</div>
<div class="t" style="left:72px;top:1.0px;font-size:12px;color:#000;letter-spacing:0.21px;">Composition</div>
<div class="t" style="left:155px;top:1.0px;font-size:12px;color:#000;letter-spacing:-0.41px;">Layer</div>
<div class="t" style="left:197px;top:1.0px;font-size:12px;color:#000;letter-spacing:-0.08px;">Effect</div>
<div class="t" style="left:241px;top:1.0px;font-size:12px;color:#000;letter-spacing:0.29px;">Animation</div>
<div class="t" style="left:311px;top:1.0px;font-size:12px;color:#000;letter-spacing:-0.45px;">View</div>
<div class="t" style="left:350px;top:1.0px;font-size:12px;color:#000;letter-spacing:0.22px;">Window</div>
<div class="t" style="left:408px;top:1.0px;font-size:12px;color:#000;letter-spacing:0.08px;">Help</div>
<div class="t" style="left:230.2px;top:23.5px;font-size:19px;color:#2d8ceb;font-weight:700;font-family:'Liberation Sans', sans-serif;transform:scaleX(1.16);transform-origin:0 50%;">T</div>
<div class="t" style="left:491px;top:24.5px;font-size:11.5px;color:#9a9a9a;letter-spacing:-0.31px;">Auto-Open Panels</div>
<div class="t" style="left:744px;top:24.5px;font-size:11.5px;color:#2d8ceb;letter-spacing:-0.06px;">Default</div>
<div class="t" style="left:825px;top:24.5px;font-size:11.5px;color:#a7a7a7;letter-spacing:-0.09px;">Standard</div>
<div class="t" style="left:915px;top:24.5px;font-size:11.5px;color:#a7a7a7;letter-spacing:-0.20px;">Small Screen</div>
<div class="t" style="left:1025px;top:24.5px;font-size:11.5px;color:#a7a7a7;letter-spacing:-0.12px;">Libraries</div>
<div class="t" style="left:1195px;top:24.5px;font-size:11.5px;color:#d8d8d8;letter-spacing:-0.39px;">Search Help</div>
<div class="t" style="left:13px;top:54.0px;font-size:11.5px;color:#d6d6d6;letter-spacing:-0.26px;">Project</div>
<div class="t" style="left:22px;top:215.5px;font-size:9.7px;color:#a7a7a7;letter-spacing:-0.21px;">Name</div>
<div class="t" style="left:56px;top:215.5px;font-size:9.7px;color:#a7a7a7;">.</div>
<div class="t" style="left:145px;top:215.5px;font-size:9.7px;color:#a7a7a7;letter-spacing:-0.25px;">Type</div>
<div class="t" style="left:174px;top:215.5px;font-size:9.7px;color:#a7a7a7;">.</div>
<div class="t" style="left:221px;top:215.5px;font-size:9.7px;color:#a7a7a7;letter-spacing:-0.46px;">Size</div>
<div class="t" style="left:247px;top:215.5px;font-size:9.7px;color:#a7a7a7;">.</div>
<div class="t" style="left:270px;top:215.5px;font-size:9.7px;color:#a7a7a7;letter-spacing:-0.48px;">Frame R...</div>
<div class="t" style="left:37px;top:234.5px;font-size:11.5px;color:#a7a7a7;letter-spacing:-0.71px;">Comp 1</div>
<div class="t" style="left:147px;top:234.5px;font-size:11.5px;color:#a7a7a7;letter-spacing:-0.17px;">Composition</div>
<div class="t" style="left:271px;top:233.5px;font-size:11.5px;color:#a7a7a7;letter-spacing:-0.76px;">29.97</div>
<div class="t" style="left:87px;top:449.5px;font-size:9.7px;color:#6f8fb3;letter-spacing:-0.34px;">8 bpc</div>
<div class="t" style="left:117.5px;top:450.5px;font-size:9px;color:#6f8fb3;">.</div>
<div class="t" style="left:389px;top:54.0px;font-size:11.5px;color:#9a9a9a;letter-spacing:-0.17px;">Composition</div>
<div class="t" style="left:455px;top:54.0px;font-size:11.5px;color:#2d8ceb;letter-spacing:-0.71px;">Comp 1</div>
<div class="t" style="left:353px;top:79.0px;font-size:11.5px;color:#2d8ceb;letter-spacing:-0.71px;">Comp 1</div>
<div class="t" style="left:398px;top:446.0px;font-size:11.5px;color:#a7a7a7;letter-spacing:-0.47px;">(30.7%)</div>
<div class="t" style="left:1064px;top:446.0px;font-size:11.5px;color:#2d8ceb;letter-spacing:-0.43px;">+0.0</div>
<div class="t" style="left:1159px;top:54.0px;font-size:11.5px;color:#a7a7a7;letter-spacing:-0.05px;">Info</div>
<div class="t" style="left:1159px;top:84.0px;font-size:11.5px;color:#a7a7a7;letter-spacing:0.12px;">Audio</div>
<div class="t" style="left:1159px;top:114.0px;font-size:11.5px;color:#a7a7a7;letter-spacing:0.01px;">Preview</div>
<div class="t" style="left:1159px;top:144.0px;font-size:11.5px;color:#a7a7a7;letter-spacing:-0.29px;">Effects &amp; Presets</div>
<div class="t" style="left:1159px;top:174.0px;font-size:11.5px;color:#a7a7a7;letter-spacing:0.08px;">Align</div>
<div class="t" style="left:1159px;top:204.0px;font-size:11.5px;color:#a7a7a7;letter-spacing:-0.12px;">Libraries</div>
<div class="t" style="left:1159px;top:234.0px;font-size:11.5px;color:#d6d6d6;letter-spacing:-0.28px;">Character</div>
<div class="t" style="left:1159px;top:266.0px;font-size:11.5px;color:#d6d6d6;letter-spacing:-0.22px;">Times New Roman</div>
<div class="t" style="left:1159px;top:289.5px;font-size:11.5px;color:#d6d6d6;letter-spacing:-0.26px;">Bold</div>
<div class="t" style="left:1150.5px;top:320.5px;font-size:12px;color:#b4b4b4;font-weight:700;font-family:'Liberation Serif', serif;">T</div>
<div class="t" style="left:1156.5px;top:317.5px;font-size:19px;color:#b4b4b4;font-weight:700;font-family:'Liberation Serif', serif;transform:scaleX(1.08);transform-origin:0 50%;">T</div>
<div class="t" style="left:1176px;top:317.0px;font-size:11.5px;color:#2d8ceb;letter-spacing:-0.40px;">300</div>
<div class="t" style="left:1199px;top:317.0px;font-size:11.5px;color:#a7a7a7;letter-spacing:-0.58px;">px</div>
<div class="t" style="left:1263.5px;top:313.5px;font-size:9px;color:#b4b4b4;">A</div>
<div class="t" style="left:1263.5px;top:323.0px;font-size:9px;color:#b4b4b4;">A</div>
<div class="t" style="left:1289px;top:317.0px;font-size:11.5px;color:#2d8ceb;letter-spacing:0.08px;">Auto</div>
<div class="t" style="left:1150px;top:337.5px;font-size:13px;color:#b4b4b4;">V</div>
<div class="t" style="left:1159px;top:338.5px;font-size:13px;color:#b4b4b4;">A</div>
<div class="t" style="left:1177px;top:338.0px;font-size:11.5px;color:#565656;letter-spacing:-0.01px;">Metrics</div>
<div class="t" style="left:1259.5px;top:337.0px;font-size:11px;color:#232323;font-weight:700;font-family:'Liberation Sans', sans-serif;letter-spacing:0.27px;">VA</div>
<div class="t" style="left:1288px;top:337.0px;font-size:11.5px;color:#2d8ceb;">0</div>
<div class="t" style="left:1177px;top:369.0px;font-size:11.5px;color:#2d8ceb;">-</div>
<div class="t" style="left:1186px;top:369.0px;font-size:11.5px;color:#a7a7a7;letter-spacing:-0.58px;">px</div>
<div class="t" style="left:1157.5px;top:399.0px;font-size:20px;color:#b4b4b4;font-family:'Liberation Serif', serif;">T</div>
<div class="t" style="left:1176px;top:399.0px;font-size:11.5px;color:#2d8ceb;letter-spacing:-0.73px;">100</div>
<div class="t" style="left:1196px;top:399.0px;font-size:11.5px;color:#a7a7a7;">%</div>
<div class="t" style="left:1259.5px;top:398.4px;font-size:18px;color:#b4b4b4;font-weight:700;font-family:'Liberation Serif', serif;">T</div>
<div class="t" style="left:1288px;top:399.0px;font-size:11.5px;color:#2d8ceb;letter-spacing:-0.73px;">100</div>
<div class="t" style="left:1308px;top:399.0px;font-size:11.5px;color:#a7a7a7;">%</div>
<div class="t" style="left:1151px;top:420.5px;font-size:14px;color:#b4b4b4;">A</div>
<div class="t" style="left:1161px;top:418.0px;font-size:10px;color:#b4b4b4;">a</div>
<div class="t" style="left:1176px;top:421.0px;font-size:11.5px;color:#2d8ceb;">0</div>
<div class="t" style="left:1186px;top:421.0px;font-size:11.5px;color:#a7a7a7;letter-spacing:-0.58px;">px</div>
<div class="t" style="left:1261px;top:420.0px;font-size:11px;color:#b4b4b4;font-family:'Liberation Sans', 'Noto Sans CJK JP', sans-serif;">あ</div>
<div class="t" style="left:1288px;top:420.0px;font-size:11.5px;color:#2d8ceb;">0</div>
<div class="t" style="left:1298px;top:420.0px;font-size:11.5px;color:#a7a7a7;">%</div>
<div class="t" style="left:48px;top:476.0px;font-size:11.5px;color:#d6d6d6;letter-spacing:-0.88px;">Comp 1</div>
<div class="t" style="left:11px;top:500.5px;font-size:16px;color:#2d8ceb;font-weight:700;letter-spacing:0.47px;">0;00;00;00</div>
<div class="t" style="left:11px;top:515.5px;font-size:9.7px;color:#2a6db5;letter-spacing:0.24px;">00000 (29.97 fps)</div>
<div class="t" style="left:106px;top:535.5px;font-size:9.7px;color:#a7a7a7;">#</div>
<div class="t" style="left:121px;top:535.5px;font-size:9.7px;color:#a7a7a7;">.</div>
<div class="t" style="left:139px;top:535.5px;font-size:9.7px;color:#a7a7a7;letter-spacing:-0.28px;">Layer Name</div>
<div class="t" style="left:314px;top:534.5px;font-size:14px;color:#b4b4b4;font-family:'Liberation Serif', serif;font-style:italic;letter-spacing:-.5px;">fx</div>
<div class="t" style="left:406px;top:535.5px;font-size:9.7px;color:#a7a7a7;letter-spacing:-0.24px;">Parent &amp; Link</div>
<div class="t" style="left:432px;top:553.0px;font-size:11.5px;color:#b8b8b8;letter-spacing:0.12px;">None</div>
<div class="t" style="left:432px;top:570.0px;font-size:11.5px;color:#b8b8b8;letter-spacing:0.12px;">None</div>
<div class="t" style="left:107px;top:552.0px;font-size:11.5px;color:#c4c4c4;">1</div>
<div class="t" style="left:137.5px;top:553.0px;font-size:13.5px;color:#c4c4c4;font-weight:700;font-family:'Liberation Serif', serif;">T</div>
<div class="t" style="left:156px;top:553.0px;font-size:11.5px;color:#c4c4c4;letter-spacing:0.21px;">Animation</div>
<div class="t" style="left:107px;top:569.0px;font-size:11.5px;color:#c4c4c4;">2</div>
<div class="t" style="left:156px;top:570.0px;font-size:11.5px;color:#c4c4c4;letter-spacing:0.11px;">background layer</div>
<div class="t" style="left:271px;top:686.0px;font-size:11.5px;color:#a7a7a7;letter-spacing:-0.23px;">Toggle Switches / Modes</div>
<div class="t" style="left:588px;top:512.5px;font-size:10.5px;color:#a7a7a7;letter-spacing:-0.55px;">2s</div>
<div class="t" style="left:641px;top:512.5px;font-size:10.5px;color:#a7a7a7;letter-spacing:-0.55px;">4s</div>
<div class="t" style="left:695px;top:512.5px;font-size:10.5px;color:#a7a7a7;letter-spacing:-0.55px;">6s</div>
<div class="t" style="left:748px;top:512.5px;font-size:10.5px;color:#a7a7a7;letter-spacing:-0.55px;">8s</div>
<div class="t" style="left:797px;top:512.5px;font-size:10.5px;color:#a7a7a7;letter-spacing:-0.65px;">10s</div>
<div class="t" style="left:851px;top:512.5px;font-size:10.5px;color:#a7a7a7;letter-spacing:-0.65px;">12s</div>
<div class="t" style="left:904px;top:512.5px;font-size:10.5px;color:#a7a7a7;letter-spacing:-0.65px;">14s</div>
<div class="t" style="left:957px;top:512.5px;font-size:10.5px;color:#a7a7a7;letter-spacing:-0.65px;">16s</div>
<div class="t" style="left:1010px;top:512.5px;font-size:10.5px;color:#a7a7a7;letter-spacing:-0.65px;">18s</div>
<div class="t" style="left:1064px;top:512.5px;font-size:10.5px;color:#a7a7a7;letter-spacing:-0.65px;">20s</div>
<div class="t" style="left:1117px;top:512.5px;font-size:10.5px;color:#a7a7a7;letter-spacing:-0.65px;">22s</div>
<div class="t" style="left:1170px;top:512.5px;font-size:10.5px;color:#a7a7a7;letter-spacing:-0.65px;">24s</div>
<div class="t" style="left:1224px;top:512.5px;font-size:10.5px;color:#a7a7a7;letter-spacing:-0.65px;">26s</div>
<div class="t" style="left:1277px;top:512.5px;font-size:10.5px;color:#a7a7a7;letter-spacing:-0.65px;">28s</div>
<div class="t" style="left:1330px;top:512.5px;font-size:10.5px;color:#a7a7a7;letter-spacing:-0.65px;">30s</div>
<div class="r" style="left:457px;top:392px;width:245px;height:231px;background:#f0f0f0;border:1px solid #9a9a9a;box-shadow:inset 0 0 0 1px #fbfbfb, 2px 2px 3px rgba(0,0,0,.5)"></div>
<div class="r" style="left:488px;top:471px;width:212px;height:1px;background:#d7d7d7;"></div>
<div class="r" style="left:488px;top:545px;width:212px;height:1px;background:#d7d7d7;"></div>
<div class="r" style="left:488px;top:573px;width:212px;height:1px;background:#d7d7d7;"></div>
<div class="r" style="left:460px;top:395px;width:240px;height:22px;background:#d1e2f2;border:1px solid #8fc0ee"></div>
<div class="r" style="left:487px;top:396px;width:1px;height:224px;background:rgba(0,0,0,.13);"></div>
<svg class="r" style="left:690px;top:401.5px" width="5" height="8" viewBox="0 0 5 8"><path d="M0 0l4.200 4-4.200 4z" fill="#222"/></svg>
<svg class="r" style="left:690px;top:481.5px" width="5" height="8" viewBox="0 0 5 8"><path d="M0 0l4.200 4-4.200 4z" fill="#222"/></svg>
<svg class="r" style="left:690px;top:503.5px" width="5" height="8" viewBox="0 0 5 8"><path d="M0 0l4.200 4-4.200 4z" fill="#222"/></svg>
<div class="r" style="left:700px;top:392px;width:229px;height:233px;background:#f0f0f0;border:1px solid #9a9a9a;box-shadow:inset 0 0 0 1px #fbfbfb, 2px 2px 3px rgba(0,0,0,.5)"></div>
<div class="r" style="left:731px;top:420px;width:195px;height:1px;background:#d7d7d7;"></div>
<div class="r" style="left:703px;top:445px;width:224px;height:22px;background:#d1e2f2;border:1px solid #8fc0ee"></div>
<div class="r" style="left:730px;top:395px;width:1px;height:227px;background:rgba(0,0,0,.13);"></div>
<svg class="r" style="left:0;top:0" width="1364" height="702" viewBox="0 0 1364 702"><rect x="464.300" y="396.500" width="234.900" height="21.800" fill="none" stroke="#ff0000" stroke-width="4"/><rect x="699.300" y="446.650" width="233.200" height="19.650" fill="none" stroke="#ff0000" stroke-width="4"/></svg>
<div class="t" style="left:492px;top:397.5px;font-size:12px;color:#000;letter-spacing:-0.34px;">New</div>
<div class="t" style="left:492px;top:426.5px;font-size:12px;color:#000;letter-spacing:-0.02px;">Composition Settings...</div>
<div class="t" style="left:492px;top:449.0px;font-size:12px;color:#000;letter-spacing:-0.06px;">Reveal Composition in Project</div>
<div class="t" style="left:492px;top:477.5px;font-size:12px;color:#000;letter-spacing:-0.24px;">Preview</div>
<div class="t" style="left:492px;top:499.5px;font-size:12px;color:#000;letter-spacing:-0.23px;">Switch 3D View</div>
<div class="t" style="left:492px;top:521.5px;font-size:12px;color:#000;letter-spacing:-0.39px;">Rename</div>
<div class="t" style="left:492px;top:550.5px;font-size:12px;color:#000;letter-spacing:-0.25px;">Open in Essential Graphics</div>
<div class="t" style="left:492px;top:580.0px;font-size:12px;color:#000;letter-spacing:0.09px;">Composition Flowchart</div>
<div class="t" style="left:492px;top:601.5px;font-size:12px;color:#000;letter-spacing:0.19px;">Composition Mini-Flowchart</div>
<div class="t" style="left:735px;top:397.5px;font-size:12px;color:#000;letter-spacing:-0.24px;">Viewer</div>
<div class="t" style="left:735px;top:426.5px;font-size:12px;color:#000;">Text</div>
<div class="t" style="left:735px;top:448.5px;font-size:12px;color:#000;letter-spacing:-0.21px;">Solid...</div>
<div class="t" style="left:735px;top:471.0px;font-size:12px;color:#000;">Light...</div>
<div class="t" style="left:735px;top:493.0px;font-size:12px;color:#000;letter-spacing:-0.41px;">Camera...</div>
<div class="t" style="left:735px;top:515.0px;font-size:12px;color:#000;letter-spacing:0.12px;">Null Object</div>
<div class="t" style="left:735px;top:537.0px;font-size:12px;color:#000;letter-spacing:-0.46px;">Shape Layer</div>
<div class="t" style="left:735px;top:559.0px;font-size:12px;color:#000;letter-spacing:-0.02px;">Adjustment Layer</div>
<div class="t" style="left:735px;top:581.0px;font-size:12px;color:#000;letter-spacing:-0.09px;">Adobe Photoshop File...</div>
<div class="t" style="left:735px;top:603.0px;font-size:12px;color:#000;letter-spacing:-0.25px;">MAXON CINEMA 4D File...</div>
</div>
</body></html>
